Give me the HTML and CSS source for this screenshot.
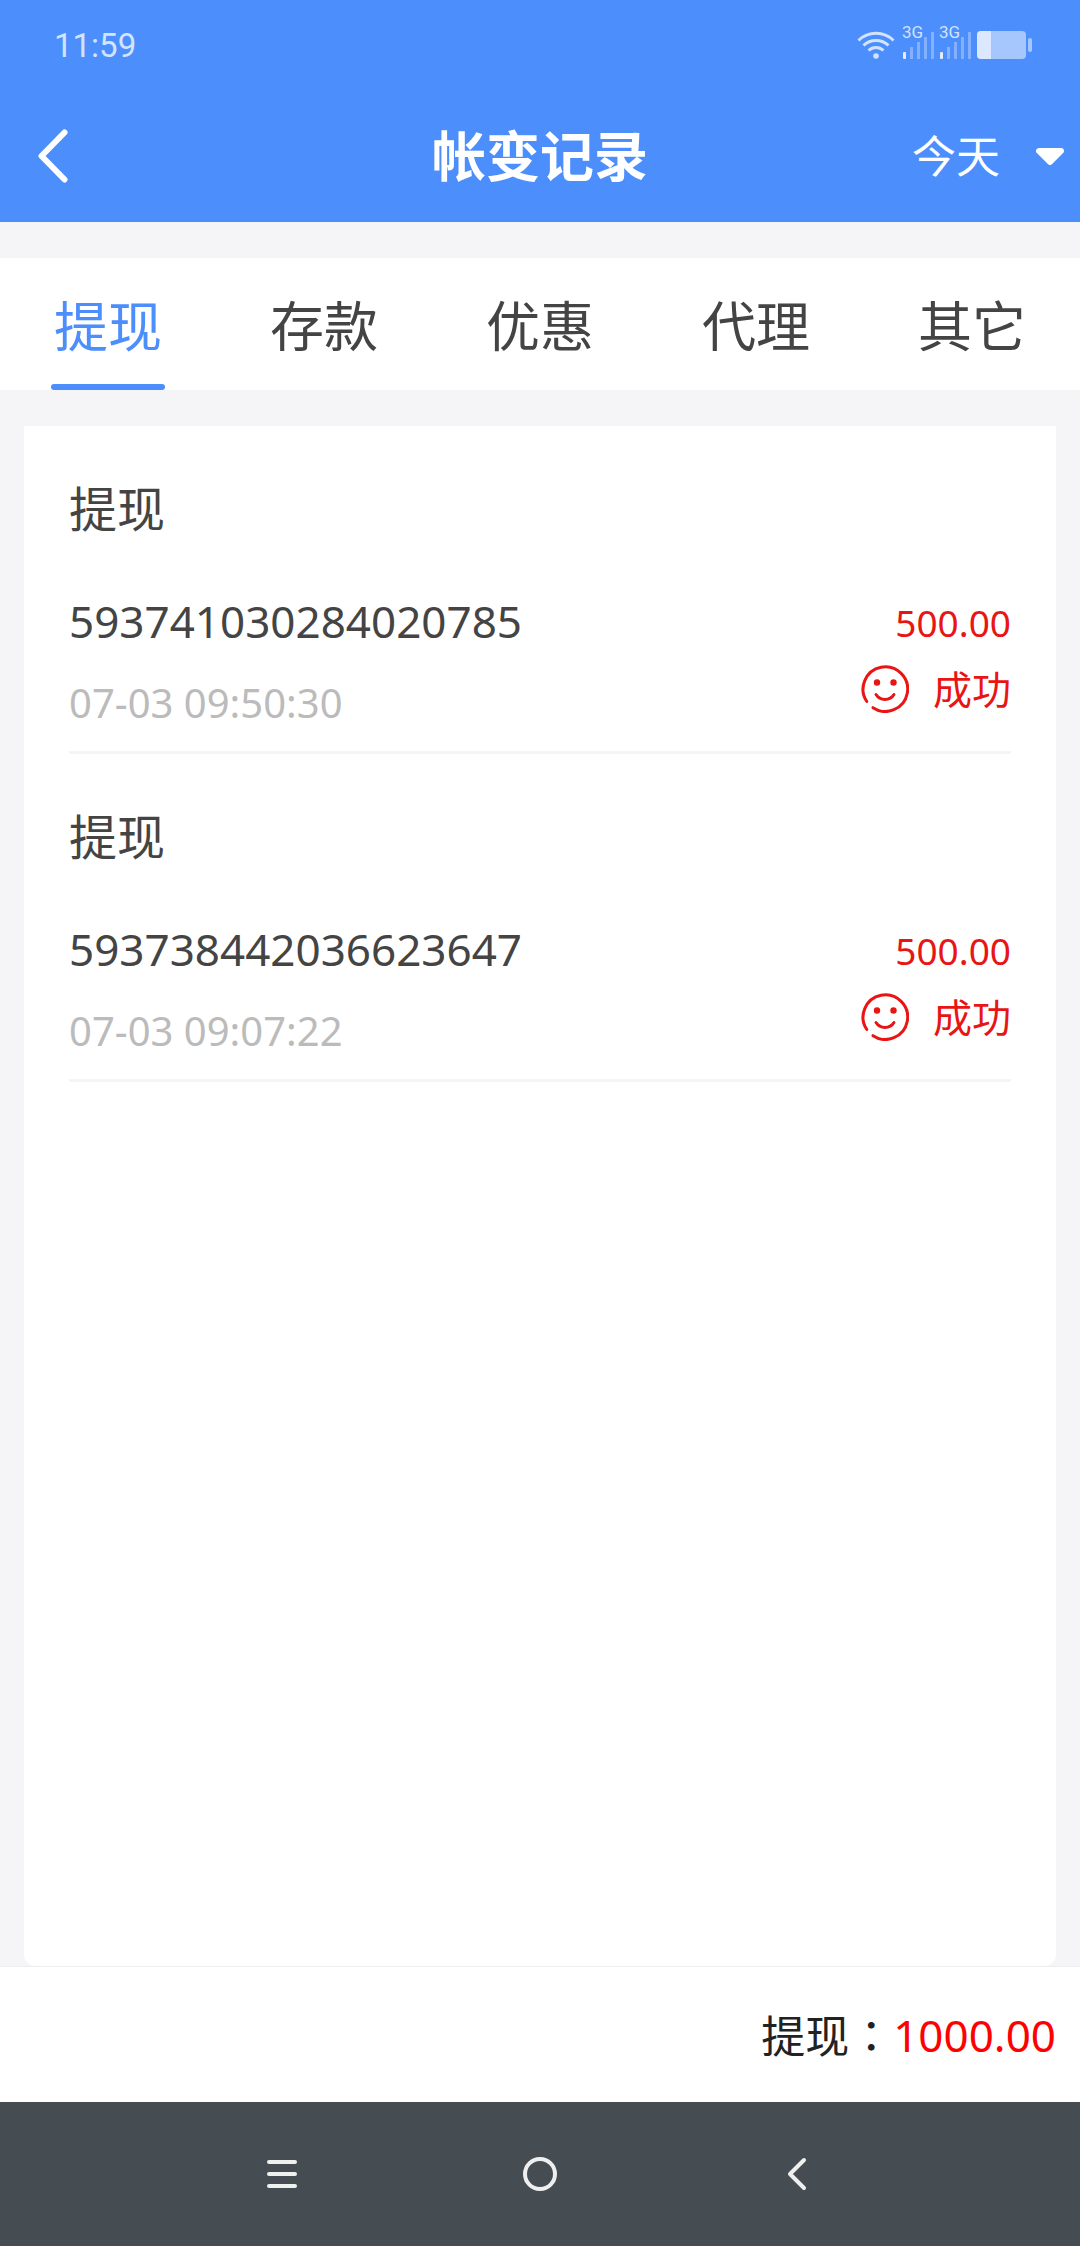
FILE: index.html
```
<!DOCTYPE html>
<html lang="zh-CN">
<head>
    <meta charset="UTF-8">
    <meta name="viewport" content="width=device-width, initial-scale=1">
    <title>帐变记录</title>
    <link rel="stylesheet" href="styles.css">
</head>
<body>
    <div class="status-bar">
        <span class="clock">11:59</span>
        <div class="status-icons">
            <svg class="wifi" viewBox="0 0 38 28" width="38" height="28">
                <g fill="none" stroke="#d2e3fe" stroke-width="3">
                    <path d="M1.5 9.5a25 25 0 0 1 35 0"/>
                    <path d="M6.500 14.500a18 18 0 0 1 25 0"/>
                    <path d="M11.500 19.500a11 11 0 0 1 15 0"/>
                </g>
                <circle cx="19" cy="25" r="2.800" fill="#d2e3fe"/>
            </svg>
            <div class="signal">
                <span class="network">3G</span>
                <svg viewBox="0 0 32 28" width="32" height="28">
                    <rect x="0" y="21" width="3" height="7" rx="1" fill="#e4eeff"/>
                    <path d="M8.500 16v12M15.500 11v17M22.500 6v22M29.500 1v27" stroke="#83b1fd" stroke-width="3"/>
                </svg>
            </div>
            <div class="signal">
                <span class="network">3G</span>
                <svg viewBox="0 0 32 28" width="32" height="28">
                    <rect x="0" y="21" width="3" height="7" rx="1" fill="#e4eeff"/>
                    <path d="M8.500 16v12M15.500 11v17M22.500 6v22M29.500 1v27" stroke="#83b1fd" stroke-width="3"/>
                </svg>
            </div>
            <svg viewBox="0 0 55 28" width="55" height="28">
                <rect width="49" height="28" rx="4" fill="#a6c7fe"/>
                <path d="M4 0h10v28H4a4 4 0 0 1-4-4V4a4 4 0 0 1 4-4z" fill="#dbe8ff"/>
                <rect x="51" y="7" width="4" height="14" rx="2" fill="#a6c7fe"/>
            </svg>
        </div>
    </div>

    <header class="header">
        <button class="back" type="button" aria-label="返回">
            <svg viewBox="0 0 30 54" width="30" height="54">
                <path d="M26.500 3.500L3.500 27l23 23.500" fill="none" stroke="#fff" stroke-width="6" stroke-linecap="round" stroke-linejoin="round"/>
            </svg>
        </button>
        <h1>帐变记录</h1>
        <div class="period">
            <select aria-label="日期">
                <option>今天</option>
            </select>
            <svg viewBox="0 0 28 17" width="28" height="17">
                <path d="M3 3h22L14 14z" fill="#fff" stroke="#fff" stroke-width="6" stroke-linejoin="round"/>
            </svg>
        </div>
    </header>

    <nav class="tabs">
        <a class="active" href="#withdraw">提现</a>
        <a href="#deposit">存款</a>
        <a href="#promo">优惠</a>
        <a href="#agent">代理</a>
        <a href="#other">其它</a>
    </nav>

    <main class="records">
        <article class="record">
            <h2>提现</h2>
            <div class="detail">
                <div>
                    <div class="order">593741030284020785</div>
                    <time>07-03 09:50:30</time>
                </div>
                <div class="result">
                    <div class="amount">500.00</div>
                    <div class="state">
                        <svg viewBox="0 0 48 48" width="48" height="48">
                            <path d="M5.800 36.500a22.300 22.300 0 1 1 6.200 6.200" fill="none" stroke="#e91414" stroke-width="3" stroke-linecap="round"/>
                            <path d="M15 29.500c4 6.500 14 6.500 18 0" fill="none" stroke="#e91414" stroke-width="3" stroke-linecap="round"/>
                            <circle cx="16" cy="17.500" r="3.200" fill="#e91414"/>
                            <circle cx="32.500" cy="17.500" r="3.200" fill="#e91414"/>
                        </svg>
                        <span>成功</span>
                    </div>
                </div>
            </div>
        </article>
        <article class="record">
            <h2>提现</h2>
            <div class="detail">
                <div>
                    <div class="order">593738442036623647</div>
                    <time>07-03 09:07:22</time>
                </div>
                <div class="result">
                    <div class="amount">500.00</div>
                    <div class="state">
                        <svg viewBox="0 0 48 48" width="48" height="48">
                            <path d="M5.800 36.500a22.300 22.300 0 1 1 6.200 6.200" fill="none" stroke="#e91414" stroke-width="3" stroke-linecap="round"/>
                            <path d="M15 29.500c4 6.500 14 6.500 18 0" fill="none" stroke="#e91414" stroke-width="3" stroke-linecap="round"/>
                            <circle cx="16" cy="17.500" r="3.200" fill="#e91414"/>
                            <circle cx="32.500" cy="17.500" r="3.200" fill="#e91414"/>
                        </svg>
                        <span>成功</span>
                    </div>
                </div>
            </div>
        </article>
    </main>

    <footer class="total">
        <span class="total-label">提现<span class="colon" lang="zh-TW">：</span></span>
        <span class="total-amount">1000.00</span>
    </footer>

    <div class="system-nav">
        <button type="button" aria-label="菜单">
            <svg viewBox="0 0 34 34" width="34" height="34">
                <path d="M4 5h26M4 17h26M4 29h26" stroke="#eff1ef" stroke-width="4" stroke-linecap="round"/>
            </svg>
        </button>
        <button type="button" aria-label="主页">
            <svg viewBox="0 0 34 34" width="34" height="34">
                <circle cx="17" cy="17" r="15" fill="none" stroke="#efefef" stroke-width="4"/>
            </svg>
        </button>
        <button type="button" aria-label="返回">
            <svg viewBox="0 0 34 34" width="34" height="34">
                <path d="M23 3L9 17l14 14" fill="none" stroke="#efefef" stroke-width="4" stroke-linecap="round" stroke-linejoin="round"/>
            </svg>
        </button>
    </div>
</body>
</html>
```

FILE: styles.css
```
* {
    box-sizing: border-box;
}
body {
    display: flex;
    flex-direction: column;
    min-height: 100vh;
    margin: 0;
    background-color: #f5f5f8;
    color: #444;
    font-family: "Noto Sans", "Noto Sans CJK SC", sans-serif;
}
svg {
    display: block;
    flex: none;
}
button {
    padding: 0;
    border: 0;
    background: none;
}

/* status bar */
.status-bar {
    display: flex;
    align-items: center;
    justify-content: space-between;
    height: 92px;
    padding: 0 48px 2px 54px;
    background-color: #4c8efb;
    color: #d2e3fe;
    font-family: Roboto, sans-serif;
}
.clock {
    font-size: 33px;
}
.status-icons {
    display: flex;
    align-items: center;
}
.wifi {
    margin-right: 8px;
}
.signal {
    position: relative;
    margin-right: 5px;
}
.network {
    position: absolute;
    top: -9px;
    left: -1px;
    font-size: 17px;
    line-height: 20px;
}

/* header */
.header {
    display: grid;
    grid-template-columns: 1fr auto 1fr;
    align-items: center;
    height: 130px;
    padding: 0 16px 2px;
    background-color: #4c8efb;
    color: #fff;
}
.header h1 {
    margin: 0;
    font-size: 54px;
    font-weight: 700;
    line-height: 80px;
}
.back {
    justify-self: start;
    padding-left: 22px;
}
.period {
    display: flex;
    align-items: center;
    justify-self: end;
    gap: 36px;
}
.period select {
    appearance: none;
    padding: 0;
    border: 0;
    background: none;
    color: #fff;
    font-family: inherit;
    font-size: 44px;
    line-height: 64px;
}

/* tabs */
.tabs {
    display: flex;
    margin: 36px 0;
    background-color: #fff;
}
.tabs a {
    position: relative;
    flex: 1;
    height: 132px;
    color: #444;
    font-size: 54px;
    line-height: 136px;
    text-align: center;
    text-decoration: none;
}
.tabs .active {
    color: #4c8efb;
}
.tabs .active::after {
    content: "";
    position: absolute;
    bottom: 0;
    left: 50%;
    width: 114px;
    height: 6px;
    margin-left: -57px;
    border-radius: 3px;
    background-color: #4c8efb;
}

/* records */
.records {
    flex: 1;
    margin: 0 24px;
    padding: 0 45px;
    border-radius: 0 0 12px 12px;
    background-color: #fff;
}
.record {
    padding: 48px 0 18px;
    border-bottom: 3px solid #f5f5f7;
}
.record h2 {
    margin: 0 0 37px;
    font-size: 48px;
    font-weight: 400;
    line-height: 70px;
}
.detail {
    display: flex;
    justify-content: space-between;
}
.order {
    margin-bottom: 12px;
    font-size: 44px;
    line-height: 80px;
}
.record time {
    display: block;
    color: #bbb;
    font-size: 40px;
    line-height: 60px;
}
.result {
    color: #e91414;
}
.amount {
    font-size: 37px;
    line-height: 84px;
    text-align: right;
}
.state {
    display: flex;
    align-items: center;
    gap: 24px;
    font-size: 39px;
    line-height: 48px;
}

/* total */
.total {
    display: flex;
    align-items: center;
    justify-content: flex-end;
    height: 136px;
    padding: 0 24px;
    border-top: 1px solid #eeeef1;
    background-color: #fff;
    font-size: 44px;
    line-height: 64px;
}
.total-label {
    color: #222;
}
.colon {
    font-family: "Noto Sans CJK TC", sans-serif;
}
.total-amount {
    color: #f00;
}

/* system navigation */
.system-nav {
    display: flex;
    align-items: center;
    justify-content: center;
    gap: 224px;
    height: 144px;
    background-color: #454c52;
}
```
